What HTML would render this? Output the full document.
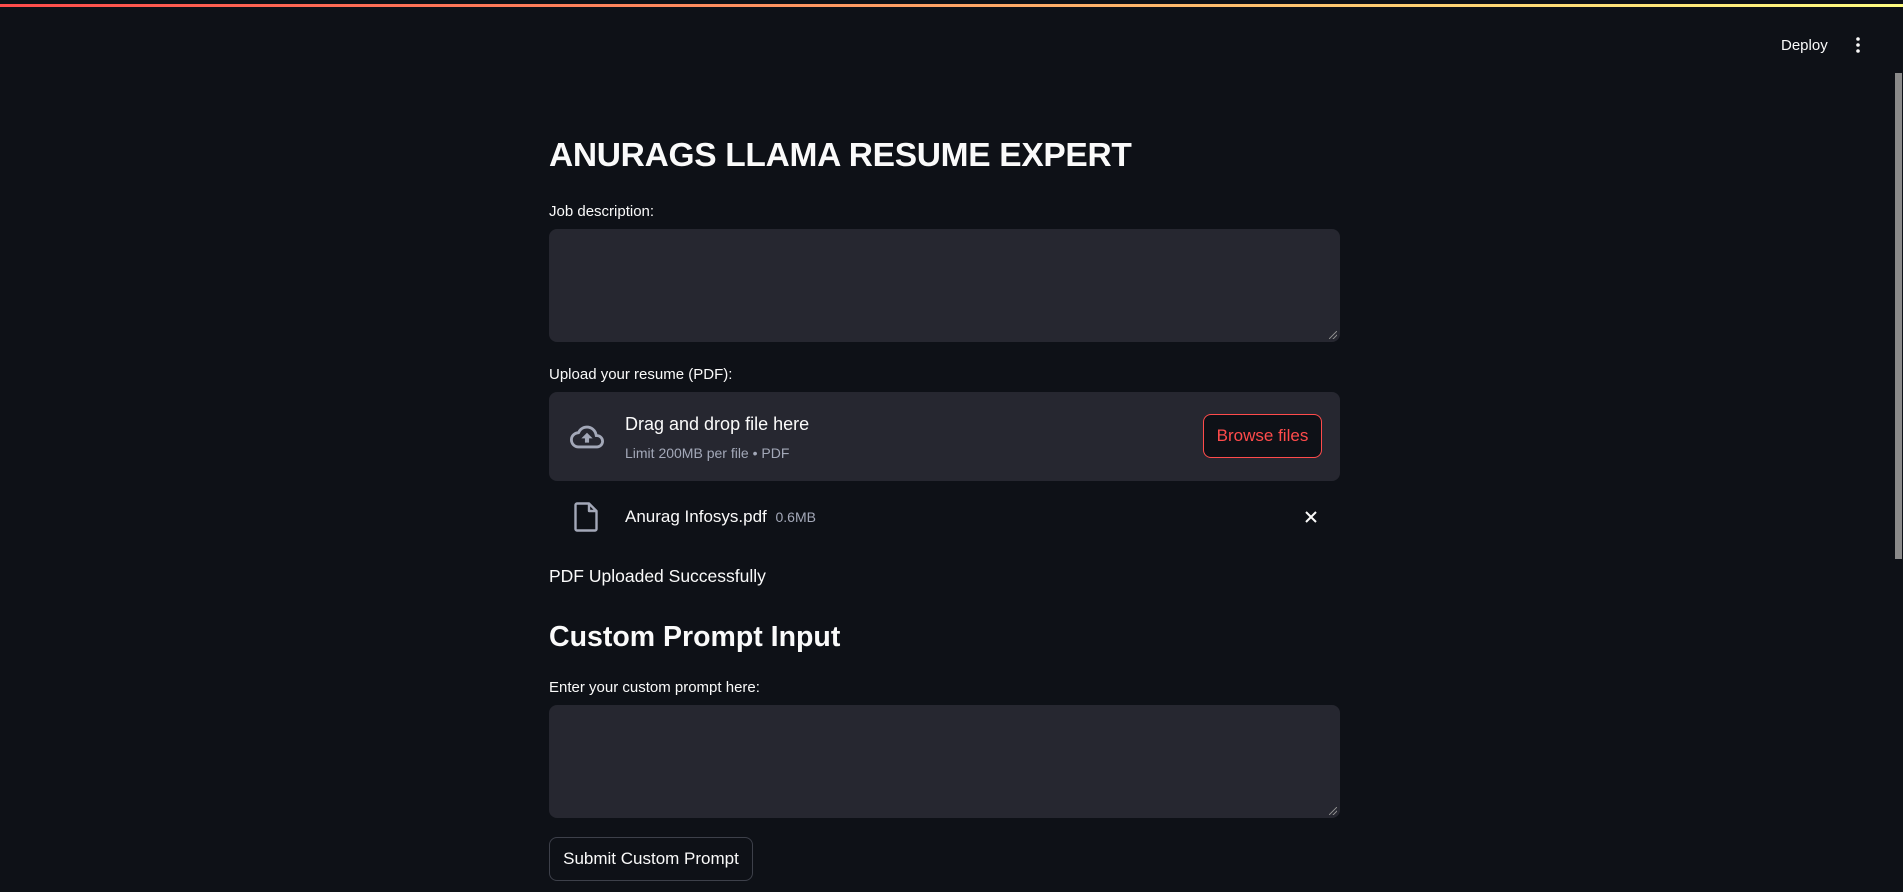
<!DOCTYPE html>
<html><head><meta charset="utf-8"><style>
*{box-sizing:border-box;margin:0;padding:0}
html,body{width:1903px;height:892px;overflow:hidden;background:#0e1117;color:#fafafa;font-family:"Liberation Sans",sans-serif}
.bar{position:absolute;left:0;top:4px;width:1903px;height:3px;background:linear-gradient(90deg,#ff4b4b,#fffd80)}
.abs{position:absolute}
.ta{position:absolute;left:549px;width:791px;background:#262730;border-radius:8px}
.lbl{position:absolute;left:549px;font-size:15px;color:#fafafa}
.grip{position:absolute;right:3px;bottom:3px;width:8px;height:8px;background:linear-gradient(135deg,transparent 45%,#888 45%,#888 55%,transparent 55%,transparent 70%,#888 70%,#888 80%,transparent 80%)}
</style></head><body>
<div class="bar"></div>
<div class="abs" style="left:1781px;top:37px;font-size:15px">Deploy</div>
<svg class="abs" style="left:1852px;top:36px" width="12" height="18"><circle cx="6" cy="3" r="1.8" fill="#fafafa"/><circle cx="6" cy="9" r="1.8" fill="#fafafa"/><circle cx="6" cy="15" r="1.8" fill="#fafafa"/></svg>
<div class="abs" style="left:1895px;top:73px;width:7px;height:486px;background:#8a8a8a"></div>

<div class="abs" style="left:549px;top:137px;font-size:33.5px;font-weight:bold;white-space:nowrap;letter-spacing:-0.3px">ANURAGS LLAMA RESUME EXPERT</div>
<div class="lbl" style="top:203px">Job description:</div>
<div class="ta" style="top:229px;height:113px"><div class="grip"></div></div>

<div class="lbl" style="top:366px">Upload your resume (PDF):</div>
<div class="ta" style="top:392px;height:89px"></div>
<svg class="abs" style="left:566px;top:420px" width="42" height="34" viewBox="0 0 24 24"><path d="M19.35 10.04A7.49 7.49 0 0 0 12 4C9.11 4 6.6 5.64 5.35 8.04A5.99 5.99 0 0 0 0 14c0 3.31 2.69 6 6 6h13c2.76 0 5-2.24 5-5 0-2.64-2.05-4.78-4.65-4.96zM19 18H6c-2.21 0-4-1.79-4-4 0-2.05 1.53-3.76 3.56-3.97l1.07-.11.5-.95A5.47 5.47 0 0 1 12 6c2.62 0 4.88 1.86 5.39 4.43l.3 1.5 1.53.11A2.98 2.98 0 0 1 22 15c0 1.65-1.35 3-3 3zM8 13h2.55v3h2.9v-3H16l-4-4z" fill="#a3a8b8"/></svg>
<div class="abs" style="left:625px;top:414px;font-size:18px">Drag and drop file here</div>
<div class="abs" style="left:625px;top:445px;font-size:14px;color:#a3a8b8">Limit 200MB per file • PDF</div>
<div class="abs" style="left:1203px;top:414px;width:119px;height:44px;border:1px solid #ff4b4b;border-radius:8px;background:#0e1117;color:#ff4b4b;font-size:17px;text-align:center;line-height:42px">Browse files</div>

<svg class="abs" style="left:574px;top:502px" width="24" height="30" viewBox="0 0 16 20"><path d="M2 1h8l5 5v12a1 1 0 0 1-1 1H2a1 1 0 0 1-1-1V2a1 1 0 0 1 1-1zM10 1v5h5" fill="none" stroke="#a3a8b8" stroke-width="1.6" stroke-linejoin="round"/></svg>
<div class="abs" style="left:625px;top:507px;font-size:17px">Anurag Infosys.pdf <span style="font-size:14px;color:#a3a8b8;margin-left:4px">0.6MB</span></div>
<svg class="abs" style="left:1304px;top:510px" width="14" height="14"><path d="M2 2L12 12M12 2L2 12" stroke="#fafafa" stroke-width="2"/></svg>

<div class="abs" style="left:549px;top:566px;font-size:17.5px">PDF Uploaded Successfully</div>
<div class="abs" style="left:549px;top:621px;font-size:28.5px;font-weight:bold">Custom Prompt Input</div>
<div class="lbl" style="top:679px">Enter your custom prompt here:</div>
<div class="ta" style="top:705px;height:113px"><div class="grip"></div></div>
<div class="abs" style="left:549px;top:837px;width:204px;height:44px;border:1px solid #3d404a;border-radius:8px;font-size:17px;text-align:center;line-height:42px">Submit Custom Prompt</div>
</body></html>
